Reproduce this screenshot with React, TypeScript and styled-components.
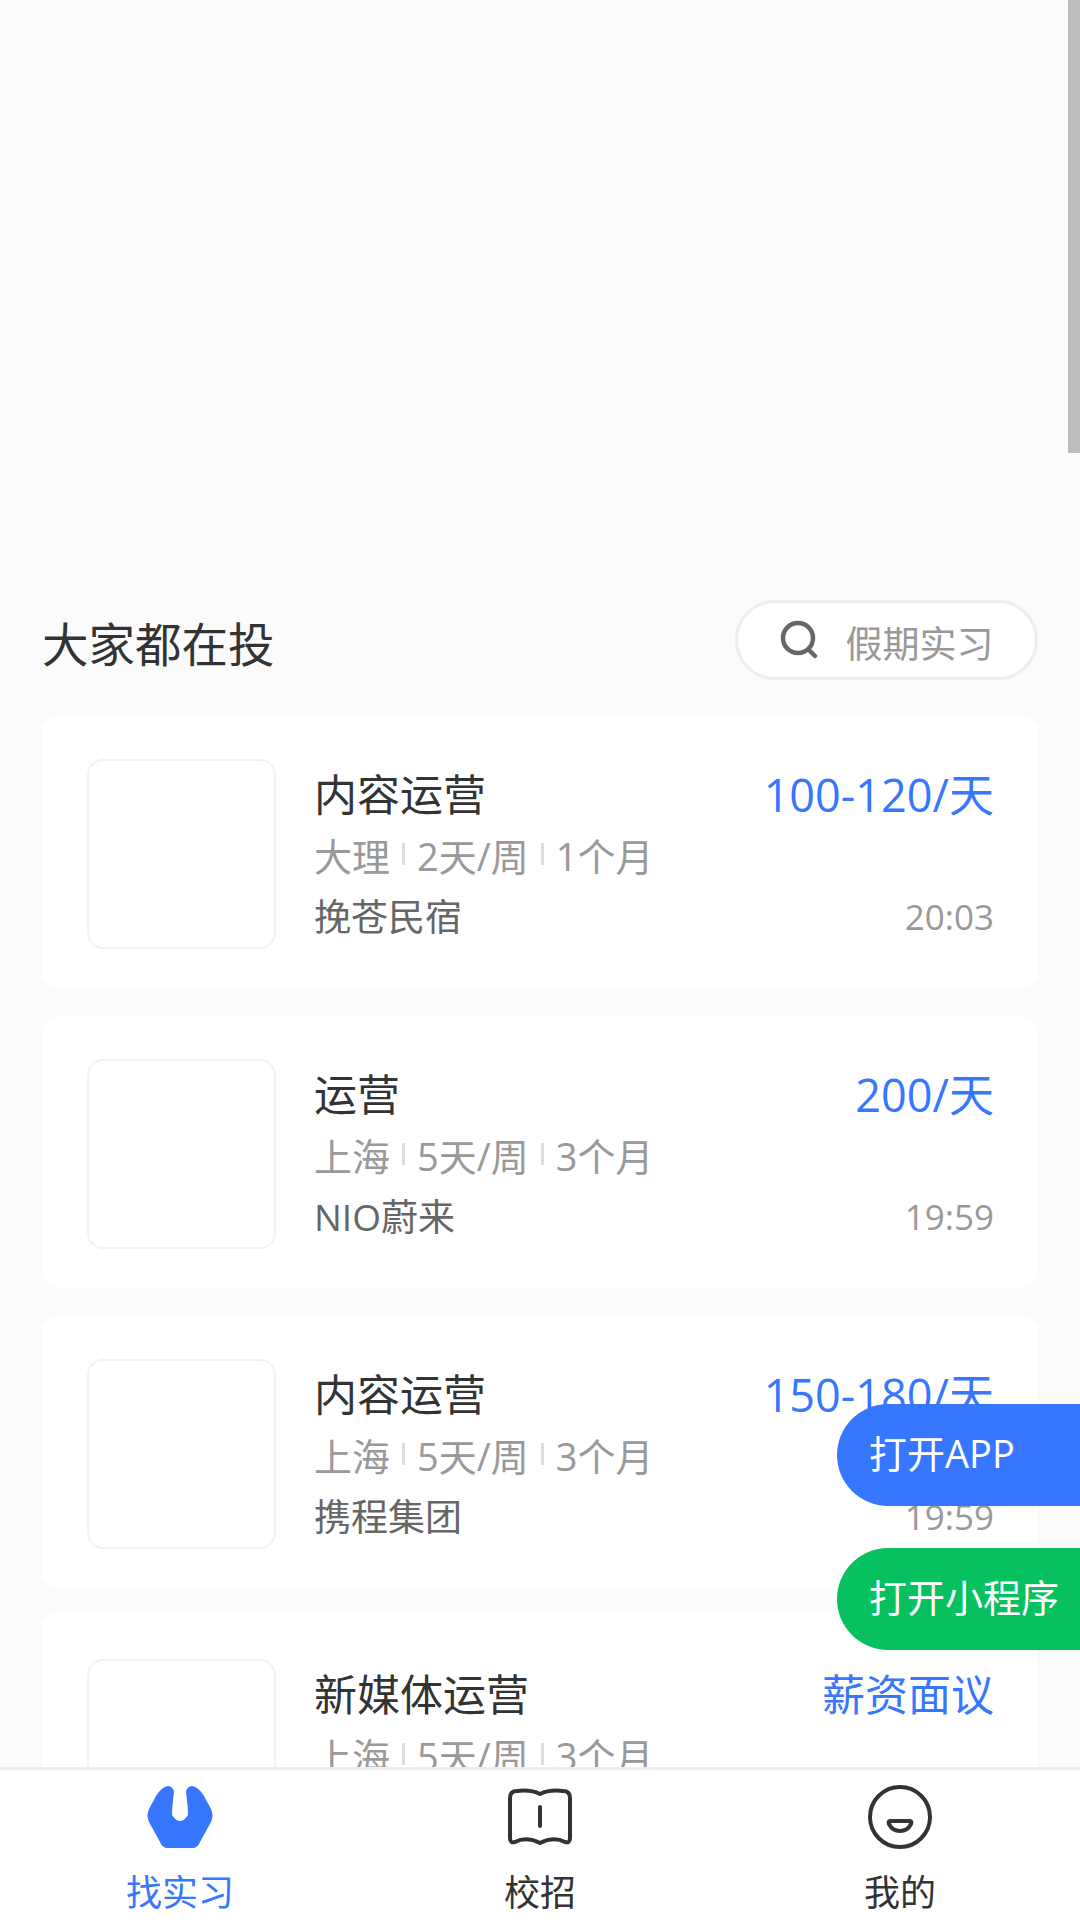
import styled, { createGlobalStyle } from 'styled-components'

interface IJob {
  title: string
  salary: string
  negotiable?: boolean
  city: string
  days: string
  months: string
  company: string
  time: string
}

const jobs: IJob[] = [
  { title: '内容运营', salary: '100-120/天', city: '大理', days: '2天/周', months: '1个月', company: '挽苍民宿', time: '20:03' },
  { title: '运营', salary: '200/天', city: '上海', days: '5天/周', months: '3个月', company: 'NIO蔚来', time: '19:59' },
  { title: '内容运营', salary: '150-180/天', city: '上海', days: '5天/周', months: '3个月', company: '携程集团', time: '19:59' },
  { title: '新媒体运营', salary: '薪资面议', negotiable: true, city: '上海', days: '5天/周', months: '3个月', company: '', time: '' },
]

function SearchIcon() {
  return (
    <svg width="38" height="40" viewBox="0 0 38 40" fill="none" stroke="#666" strokeWidth="4.5" strokeLinecap="round">
      <circle cx="18" cy="18" r="15" />
      <path d="M29 30l6 6" />
    </svg>
  )
}

function InternIcon() {
  return (
    <svg width="66" height="62" viewBox="0 0 66 62" fill="#3776ff">
      <path d="M21 0C24 0 27 3 27 6C26 14 25 22 25 29C27 32 30 35 33 35C36 35 39 32 41 29C41 22 40 14 39 6C39 3 42 0 45 0C50 1 54 5 57 10L64 23C66 27 66 32 64 36L53 56C51 60 49 62 45 62H21C17 62 15 60 13 56L2 36C0 32 0 27 2 23L9 10C12 5 16 1 21 0Z" />
    </svg>
  )
}

function BookIcon() {
  return (
    <svg width="66" height="58" viewBox="0 0 66 58" fill="none" stroke="#333" strokeWidth="4" strokeLinecap="round" strokeLinejoin="round">
      <path d="M3 10C3 5 6 3 10 3C18 2 27 3 33 6C39 3 48 2 56 3C60 3 63 5 63 10V50C63 54 61 55 58 54C50 50 41 51 33 55C25 51 16 50 8 54C5 55 3 54 3 50Z" />
      <path d="M33 19V38" />
    </svg>
  )
}

function FaceIcon() {
  return (
    <svg width="64" height="64" viewBox="0 0 64 64" fill="none" stroke="#333" strokeWidth="4">
      <circle cx="32" cy="32" r="30" />
      <path d="M22 36h20c1 0 2 1 1 3-2 4-6 7-11 7s-9-3-11-7c-1-2 0-3 1-3z" strokeLinejoin="round" />
    </svg>
  )
}

export default function App() {
  return (
    <Page>
      <GlobalStyle />
      <Scrollbar />
      <Banner />
      <Header>
        <Title>大家都在投</Title>
        <SearchBox>
          <SearchIcon />
          <SearchLabel>假期实习</SearchLabel>
        </SearchBox>
      </Header>
      <List>
        {jobs.map((job) => (
          <Card key={job.title + job.company}>
            <Logo />
            <Info>
              <TopRow>
                <JobTitle>{job.title}</JobTitle>
                <Salary $negotiable={job.negotiable}>{job.salary}</Salary>
              </TopRow>
              <Meta>
                <span>{job.city}</span>
                <Divider />
                <span>{job.days}</span>
                <Divider />
                <span>{job.months}</span>
              </Meta>
              <BottomRow>
                <Company>{job.company}</Company>
                <Time>{job.time}</Time>
              </BottomRow>
            </Info>
          </Card>
        ))}
      </List>
      <FloatGroup>
        <FloatButton $color="#3776ff">打开APP</FloatButton>
        <FloatButton $color="#07c160">打开小程序</FloatButton>
      </FloatGroup>
      <Nav>
        <NavItem $active>
          <IconSlot>
            <InternIcon />
          </IconSlot>
          <span>找实习</span>
        </NavItem>
        <NavItem>
          <IconSlot>
            <BookIcon />
          </IconSlot>
          <span>校招</span>
        </NavItem>
        <NavItem>
          <IconSlot>
            <FaceIcon />
          </IconSlot>
          <span>我的</span>
        </NavItem>
      </Nav>
    </Page>
  )
}

const GlobalStyle = createGlobalStyle`
  html, body {
    margin: 0;
    padding: 0;
    background: #fbfbfb;
  }

  * {
    box-sizing: border-box;
  }

  body {
    font-family: "Open Sans", "Noto Sans CJK SC", sans-serif;
  }
`

const Page = styled.div`
  background: #fbfbfb;
  height: 1920px;
  overflow: hidden;
  position: relative;
  width: 1080px;
`

const Scrollbar = styled.div`
  background: #bdbdbd;
  height: 453px;
  position: absolute;
  right: 0;
  top: 0;
  width: 12px;
`

const Banner = styled.div`
  height: 600px;
`

const Header = styled.div`
  align-items: center;
  display: flex;
  height: 80px;
  justify-content: space-between;
  padding: 0 42px;
`

const Title = styled.h2`
  color: #333;
  font-size: 46.5px;
  font-weight: 400;
  margin: 3px 0 0;
`

const SearchBox = styled.div`
  align-items: center;
  background: #fff;
  border: 3px solid #eee;
  border-radius: 40px;
  color: #999;
  display: flex;
  font-size: 37px;
  gap: 28px;
  height: 80px;
  justify-content: center;
  width: 303px;
`

const SearchLabel = styled.span`
  margin-top: 4px;
`

const List = styled.div`
  display: flex;
  flex-direction: column;
  gap: 30px;
  margin-top: 37px;
  padding: 0 42px;
`

const Card = styled.div`
  align-items: flex-start;
  background: #fff;
  border-radius: 16px;
  display: flex;
  flex-shrink: 0;
  gap: 38px;
  height: 270px;
  padding: 42px 44px 0 45px;

  &:last-child {
    height: 274px;
    margin-top: -4px;
    padding-top: 46px;
  }
`

const Logo = styled.div`
  background: #fff;
  border: 2px solid #f3f3f3;
  border-radius: 16px;
  flex-shrink: 0;
  height: 190px;
  width: 189px;
`

const Info = styled.div`
  display: flex;
  flex: 1;
  flex-direction: column;
  gap: 6px;
  margin-top: 3px;
  min-width: 0;
`

const TopRow = styled.div`
  align-items: center;
  display: flex;
  height: 60px;
  justify-content: space-between;
`

const JobTitle = styled.div`
  color: #333;
  font-size: 43px;
`

const Salary = styled.div<{ $negotiable?: boolean }>`
  color: #3776ff;
  font-size: ${({ $negotiable }) => ($negotiable ? '43px' : '45px')};
`

const Meta = styled.div`
  align-items: center;
  color: #999;
  display: flex;
  font-size: 38px;
  gap: 12px;
  height: 52px;
`

const Divider = styled.i`
  background: #ddd;
  height: 22px;
  width: 3px;
`

const BottomRow = styled.div`
  align-items: center;
  display: flex;
  height: 52px;
  justify-content: space-between;
  margin-top: 3px;
`

const Company = styled.div`
  color: #666;
  font-size: 37px;
`

const Time = styled.div`
  color: #999;
  font-size: 35px;
  margin-top: 3px;
`

const FloatGroup = styled.div`
  display: flex;
  flex-direction: column;
  gap: 42px;
  position: absolute;
  right: 0;
  top: 1404px;
  width: 243px;
`

const FloatButton = styled.div<{ $color: string }>`
  align-items: center;
  background: ${({ $color }) => $color};
  border-radius: 51px 0 0 51px;
  color: #fff;
  display: flex;
  font-size: 38px;
  height: 102px;
  padding: 0 0 8px 32px;
  white-space: nowrap;
`

const Nav = styled.nav`
  background: #fff;
  border-top: 3px solid #eee;
  bottom: 0;
  display: grid;
  grid-template-columns: repeat(3, 1fr);
  height: 153px;
  left: 0;
  position: absolute;
  width: 1080px;
`

const NavItem = styled.div<{ $active?: boolean }>`
  align-items: center;
  color: ${({ $active }) => ($active ? '#3776ff' : '#333')};
  display: flex;
  flex-direction: column;
  font-size: 36px;
  gap: 15px;
  padding-top: 15px;
`

const IconSlot = styled.div`
  align-items: center;
  display: flex;
  height: 64px;
  justify-content: center;
`
